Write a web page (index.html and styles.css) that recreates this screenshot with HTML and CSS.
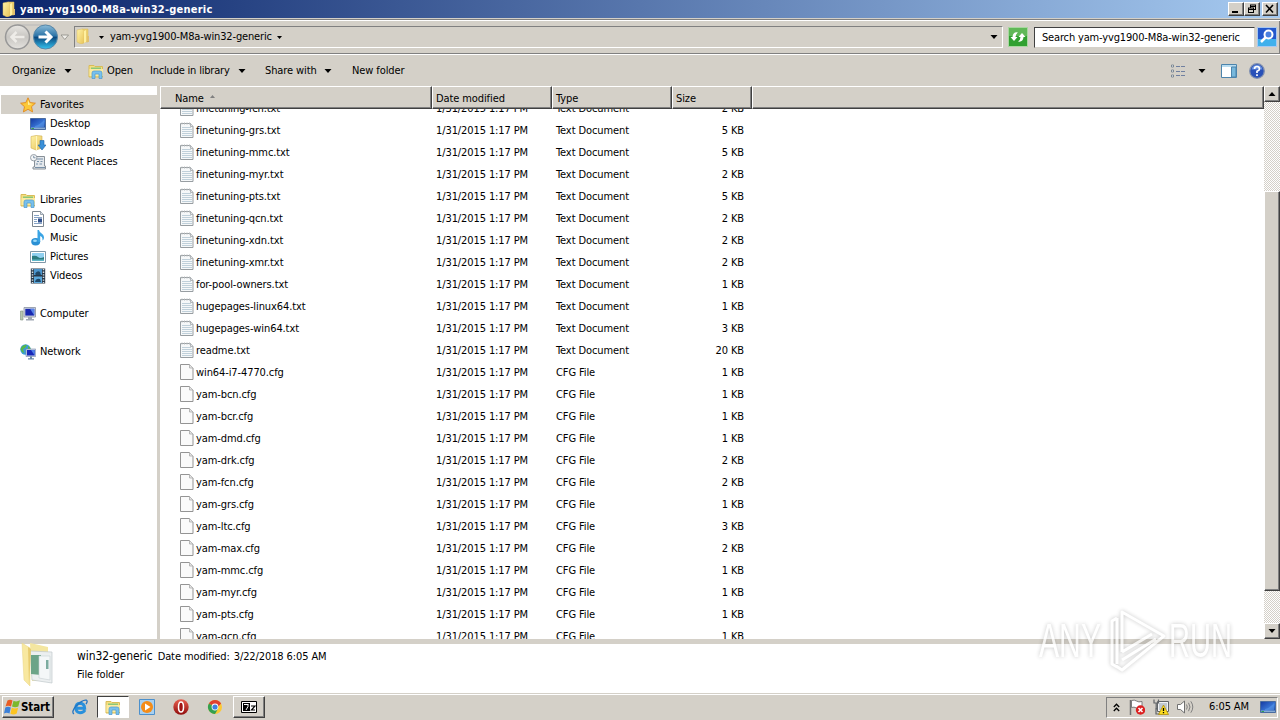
FILE: index.html
```html
<!DOCTYPE html>
<html lang="en">
<head>
    <meta charset="UTF-8">
    <title>yam-yvg1900-M8a-win32-generic</title>
    <link rel="stylesheet" href="styles.css">
</head>
<body>
    <!-- shared icons -->
    <svg class="defs">
        <defs>
            <linearGradient id="gFolder" x1="0" y1="0" x2="1" y2="1">
                <stop offset="0" stop-color="#fff3a8"/>
                <stop offset="1" stop-color="#e8c458"/>
            </linearGradient>
            <linearGradient id="gScreen" x1="0" y1="0" x2="1" y2="1">
                <stop offset="0" stop-color="#1438a0"/>
                <stop offset="0.6" stop-color="#3a78d8"/>
                <stop offset="1" stop-color="#1a3c90"/>
            </linearGradient>
            <linearGradient id="gBlue" x1="0" y1="0" x2="0" y2="1">
                <stop offset="0" stop-color="#8cbcd8"/>
                <stop offset="0.45" stop-color="#2c74a8"/>
                <stop offset="0.52" stop-color="#0c4a80"/>
                <stop offset="1" stop-color="#35c4f0"/>
            </linearGradient>
            <linearGradient id="gGrey" x1="0" y1="0" x2="0" y2="1">
                <stop offset="0" stop-color="#e8e6e2"/>
                <stop offset="0.5" stop-color="#c8c6c2"/>
                <stop offset="1" stop-color="#e4e2de"/>
            </linearGradient>
            <linearGradient id="gRed" x1="0" y1="0" x2="0" y2="1">
                <stop offset="0" stop-color="#e86050"/>
                <stop offset="1" stop-color="#900c0c"/>
            </linearGradient>
        </defs>
        <symbol id="i-folder" viewBox="0 0 16 16">
            <path d="M7 1h6v13H7z" fill="#ecd070" stroke="#d8b858" stroke-width=".5"/>
            <path d="M2 2l5-1 2 1v13l-3 1-4-2z" fill="url(#gFolder)" stroke="#dcbc60" stroke-width=".5"/>
            <path d="M9 3l2-1v12l-2 1z" fill="#fff0a0"/>
            <path d="M12 8h2v6h-2z" fill="#e0c070"/>
        </symbol>
        <symbol id="i-explorer" viewBox="0 0 16 16">
            <path d="M1 2.500h5l1 1h7.500V14H1z" fill="#f6de80" stroke="#d8bc58"/>
            <path d="M3 4.500h10v2H3z" fill="#8ac878"/>
            <path d="M1.500 6H15v7H1.500z" fill="#fbeaa0"/>
            <path d="M4 15.500V10q0-2 2-2h6q2 0 2 2v5.500h-3V11H7v4.500z" fill="#78c0ec" stroke="#4a98d0" stroke-width=".7"/>
        </symbol>
        <symbol id="i-star" viewBox="0 0 16 16">
            <path d="M8 .8l2.200 4.800 5.200.6-3.900 3.500 1.100 5.200L8 12.300l-4.600 2.600 1.100-5.200L.6 6.200l5.200-.6z" fill="#fcc838" stroke="#e08820" stroke-width=".9"/>
            <path d="M8 3l1.400 3.400 3 .5L8 8z" fill="#fff0a0"/>
        </symbol>
        <symbol id="i-desktop" viewBox="0 0 16 16">
            <path d="M.5 2.500h15v11H.5z" fill="url(#gScreen)" stroke="#4a6ca0"/>
            <path d="M1 11.500h14V13H1z" fill="#88acd4"/>
            <path d="M1.500 12h2.500v1H1.500z" fill="#30a050"/>
            <path d="M5 10q5-1 9-6v7H5z" fill="#5a98e8" opacity=".55"/>
        </symbol>
        <symbol id="i-downloads" viewBox="0 0 16 16">
            <path d="M1 1.500l5-1 6 .5v12l-6 2-5-2z" fill="url(#gFolder)" stroke="#d0b050" stroke-width=".6"/>
            <path d="M6.500 1v14" stroke="#fff6c0"/>
            <path d="M10 5.500h4V10h2l-4 5-4-5h2z" fill="#3a90d8" stroke="#1c62a8" stroke-width=".6"/>
        </symbol>
        <symbol id="i-recent" viewBox="0 0 16 16">
            <path d="M4.500 2.500h10V12H15.500v3H3v-2h1.500z" fill="#e4e8ec" stroke="#889098"/>
            <path d="M7 5h6M7 7.500h2M10.500 7.500h2M6 10h2M9.500 10H12M5 13.500h10" stroke="#7890a8"/>
            <circle cx="3.700" cy="3.700" r="3.200" fill="#f4f6f8" stroke="#98a0a8"/>
            <path d="M3.700 1.800v2h1.800" fill="none" stroke="#607890" stroke-width=".8"/>
        </symbol>
        <symbol id="i-document" viewBox="0 0 16 16">
            <path d="M2.500.5h8l3 3v12h-11z" fill="#fff" stroke="#7c8690"/>
            <path d="M10.500.5v3h3" fill="#d8e0e8" stroke="#7c8690" stroke-width=".7"/>
            <path d="M4 4.500h5M4 6.500h8M4 8.500h3M4 10.500h3M4 12.500h8" stroke="#7898c0" stroke-width=".9"/>
            <path d="M8 7.500h4v4H8z" fill="#30508c"/>
        </symbol>
        <symbol id="i-music" viewBox="0 0 16 16">
            <ellipse cx="5.700" cy="11.800" rx="4.500" ry="3.700" fill="#2a90d4"/>
            <path d="M7.500 0h1.500c.5 3 5 3.500 5 7.500 0 1.500-.8 2.500-1.500 3 .3-3-1-4-2.300-4.500V12L7.500 12z" fill="#3aa4e4"/>
            <ellipse cx="5" cy="10.800" rx="2" ry="1.300" fill="#98d8f8"/>
        </symbol>
        <symbol id="i-pictures" viewBox="0 0 16 16">
            <path d="M.5 2.500h15v11H.5z" fill="#fff" stroke="#8098a8"/>
            <path d="M2 4h12v8H2z" fill="#90d0f0"/>
            <path d="M2 7q4-1 6 1t6 0v4H2z" fill="#2c7c80"/>
            <path d="M2 10.500h12V12H2z" fill="#60b8c8"/>
        </symbol>
        <symbol id="i-videos" viewBox="0 0 16 16">
            <path d="M.8.500h14.400v15H.8z" fill="#283848"/>
            <path d="M4 1h8v6H4z" fill="#4a94cc"/>
            <path d="M4 8.500h8v6.500H4z" fill="#5aa8dc"/>
            <path d="M5 6q2-4 5-2l1 3H6zM5 14q1-4 5-3l1 3z" fill="#204868"/>
            <path d="M2.500 1v14M13.500 1v14" stroke="#d8e0e4" stroke-width="1.500" stroke-dasharray="1.300 1.300"/>
        </symbol>
        <symbol id="i-computer" viewBox="0 0 16 16">
            <path d="M.5 5h2.500v9H.5z" fill="#b8c8b0" stroke="#809080" stroke-width=".6"/>
            <path d="M4 1.500h11.500v9.500H4z" fill="#d8dce4" stroke="#8890a0" stroke-width=".8"/>
            <path d="M5.300 2.800h9v6.800h-9z" fill="#1828b0"/>
            <path d="M10 2.800h4.300v6.800z" fill="#5884e8"/>
            <path d="M8 11h4v2h2v1.500H6V13h2z" fill="#a0a8b4"/>
        </symbol>
        <symbol id="i-network" viewBox="0 0 16 16">
            <circle cx="5.500" cy="5.500" r="5.200" fill="#3a9cd4"/>
            <path d="M2 2.500Q5 0 7 1L5 4 3 5l1 4-2-1-1.500-3zM8 2l2.500 2v3H8z" fill="#58b848"/>
            <path d="M6 5h9.700v7.500H6z" fill="#c8d4e8" stroke="#7888a8" stroke-width=".6"/>
            <path d="M7 6h7.700v5.500H7z" fill="#1828b8"/>
            <path d="M11 6h3.700v5.500z" fill="#5080e8"/>
            <path d="M10 12.500h2v1.700h2v1.300H8v-1.300h2z" fill="#6888a8"/>
        </symbol>
        <symbol id="i-txt" viewBox="0 0 14 16">
            <path d="M.5 1.500h10l2.500 3v11H.5z" fill="#f6f8f9" stroke="#989ea2"/>
            <path d="M2 .5v2M4.500.5v2M7 .5v2M9.500.5v2" stroke="#b4b8ba"/>
            <path d="M2 5.500h9M2 7.500h10M2 9.500h10M2 11.500h10M2 13.500h10" stroke="#c0d0da"/>
            <path d="M10.500 1.500v3H13" fill="#e0e4e6" stroke="#a4a8ac" stroke-width=".8"/>
        </symbol>
        <symbol id="i-cfg" viewBox="0 0 14 16">
            <path d="M.5.500H9.500l3.500 3.500v11.500H.5z" fill="#fafafa" stroke="#949494"/>
            <path d="M9.500 .5v3.500H13" fill="#e4e4e4" stroke="#a8a8a8" stroke-width=".8"/>
        </symbol>
        <symbol id="i-down" viewBox="0 0 7 4"><path d="M0 0h7L3.500 4z"/></symbol>
        <symbol id="i-up" viewBox="0 0 7 4"><path d="M0 4h7L3.500 0z"/></symbol>
    </svg>

    <div class="titlebar">
        <svg class="icon"><use href="#i-folder"/></svg>
        <span class="title">yam-yvg1900-M8a-win32-generic</span>
        <div class="win-btn"><svg width="12" height="10"><path d="M2 7h6v2H2z"/></svg></div>
        <div class="win-btn"><svg width="12" height="10"><path d="M4.500 1v3M4 1h6M4 2.500h6M9.500 1v5M7 5.500h3M2 4h6M2 5.500h6M2.500 4v5M7.500 4v5M2 8.500h6" fill="none" stroke="#000"/></svg></div>
        <div class="win-btn close"><svg width="12" height="10"><path d="M2 1l7 7.500M9 1L2 8.500" stroke="#000" stroke-width="1.600"/></svg></div>
    </div>

    <div class="navbar">
        <svg class="nav-btns" width="70" height="30" viewBox="0 0 70 30">
            <path d="M16 3h28q12 0 12 12" fill="none" stroke="#b8b8b8"/>
            <circle cx="16.500" cy="15" r="12" fill="url(#gGrey)" stroke="#989898" stroke-width="1.500"/>
            <path d="M23.500 15H10.500m5-5l-5 5 5 5" fill="none" stroke="#eeece8" stroke-width="2.500"/>
            <circle cx="44.500" cy="15" r="12" fill="url(#gBlue)" stroke="#5888a8" stroke-width="1"/>
            <path d="M37.500 15h12m-5-5.500l5.500 5.500-5.500 5.500" fill="none" stroke="#fff" stroke-width="3"/>
            <path d="M60 13h7.500l-3.700 4.500z" fill="#f0eeea" stroke="#8c8c84" stroke-width=".8"/>
        </svg>
        <div class="address">
            <svg class="icon"><use href="#i-folder"/></svg>
            <svg class="crumb-arrow"><use href="#i-down"/></svg>
            <span>yam-yvg1900-M8a-win32-generic</span>
            <svg class="crumb-arrow"><use href="#i-down"/></svg>
            <svg class="arrow address-drop"><use href="#i-down"/></svg>
        </div>
        <svg class="refresh" width="20" height="20" viewBox="0 0 20 20">
            <path d="M.5.500h19v19H.5z" fill="#30a030" stroke="#a8d8a0"/>
            <path d="M1 1h18v8H1z" fill="#60b858"/>
            <path d="M2.500 10L6 14l3.500-4H7.500Q7.500 7 10 5.500 5 4.500 4.500 10zM17.500 10L14 6l-3.500 4h2Q12.500 13 10 14.500q5 1 5.500-4.500z" fill="#fff"/>
        </svg>
        <div class="search">Search yam-yvg1900-M8a-win32-generic</div>
        <svg class="search-btn" width="20" height="20" viewBox="0 0 20 20">
            <path d="M.5.500h19v19H.5z" fill="#2458cc" stroke="#a8c8f0"/>
            <path d="M1 12h18v7H1z" fill="#40b0ec"/>
            <circle cx="11.500" cy="7.500" r="4" fill="#4a80e0" stroke="#fff" stroke-width="2"/>
            <path d="M8.500 10.500L4 15" stroke="#fff" stroke-width="2.500"/>
        </svg>
    </div>

    <div class="commands">
        <span class="cmd organize">Organize<svg class="arrow"><use href="#i-down"/></svg></span>
        <span class="cmd open"><svg class="icon"><use href="#i-explorer"/></svg>Open</span>
        <span class="cmd include">Include in library<svg class="arrow"><use href="#i-down"/></svg></span>
        <span class="cmd share">Share with<svg class="arrow"><use href="#i-down"/></svg></span>
        <span class="cmd">New folder</span>
        <div class="view-tools">
            <svg width="16" height="14" viewBox="0 0 16 14">
                <path d="M1.500 1h2v2h-2zM1.500 6h2v2h-2zM1.500 11h2v2h-2z" fill="#fff" stroke="#7c8894"/>
                <path d="M6 2.500h4M11 2.500h4M6 7.500h4M11 7.500h4M6 11.500h4M11 11.500h4" stroke="#7080a0"/>
            </svg>
            <svg class="arrow"><use href="#i-down"/></svg>
            <svg class="pane" width="16" height="14" viewBox="0 0 16 14">
                <path d="M.5.500h15v13H.5z" fill="#fff" stroke="#4c84ac"/>
                <path d="M1 1h14v2H1z" fill="#b8dcf0"/>
                <path d="M10.500 3v10H15V3z" fill="#78b8dc" stroke="#4c84ac"/>
            </svg>
            <svg class="help" width="16" height="16" viewBox="0 0 16 16">
                <circle cx="8" cy="8" r="7.300" fill="#2850b8" stroke="#8090b0" stroke-width="1.300"/>
                <path d="M2.500 6.500a5.600 5.600 0 0 1 11 0z" fill="#6890e0"/>
                <path d="M5.500 6q0-2.500 2.500-2.500T10.500 6Q10.500 7.200 8 8.300V10M8 11.300v1.700" fill="none" stroke="#fff" stroke-width="1.700"/>
            </svg>
        </div>
    </div>

    <div class="main">
        <div class="sidebar">
            <div class="side-item root selected"><svg class="icon"><use href="#i-star"/></svg>Favorites</div>
            <div class="side-item"><svg class="icon"><use href="#i-desktop"/></svg>Desktop</div>
            <div class="side-item"><svg class="icon"><use href="#i-downloads"/></svg>Downloads</div>
            <div class="side-item"><svg class="icon"><use href="#i-recent"/></svg>Recent Places</div>
            <div class="side-item root spaced"><svg class="icon"><use href="#i-explorer"/></svg>Libraries</div>
            <div class="side-item"><svg class="icon"><use href="#i-document"/></svg>Documents</div>
            <div class="side-item"><svg class="icon"><use href="#i-music"/></svg>Music</div>
            <div class="side-item"><svg class="icon"><use href="#i-pictures"/></svg>Pictures</div>
            <div class="side-item"><svg class="icon"><use href="#i-videos"/></svg>Videos</div>
            <div class="side-item root spaced"><svg class="icon"><use href="#i-computer"/></svg>Computer</div>
            <div class="side-item root spaced"><svg class="icon"><use href="#i-network"/></svg>Network</div>
        </div>
        <div class="content">
            <div class="list-header">
                <div class="col name">Name<svg class="sort"><use href="#i-up"/></svg></div>
                <div class="col date">Date modified</div>
                <div class="col type">Type</div>
                <div class="col size">Size</div>
                <div class="col rest"></div>
            </div>
            <div class="list"><div class="rows" id="rows"></div></div>
        </div>
        <div class="scrollbar">
            <div class="sb-btn"><svg class="arrow"><use href="#i-up"/></svg></div>
            <div class="sb-thumb"></div>
            <div class="sb-btn bottom"><svg class="arrow"><use href="#i-down"/></svg></div>
        </div>
    </div>

    <div class="details">
        <svg class="big-folder" width="36" height="46" viewBox="0 0 36 46">
            <path d="M10 1l18 4v34H12z" fill="#f4e6a0"/>
            <path d="M10 9l22 1v31l-20-3z" fill="#eceff0" stroke="#c0c8cc" stroke-width=".7"/>
            <path d="M11 13h10v20l-10-1z" fill="#6ca488"/>
            <path d="M19 14h11v24l-11-2z" fill="#f4f7f8" stroke="#c8d0d4" stroke-width=".6"/>
            <path d="M26 18h2.500v9H26z" fill="#7cacA0"/>
            <path d="M2 1l8 5v38l-6-6z" fill="#f8e8a0" stroke="#e8d484" stroke-width=".5"/>
            <path d="M8 5l3 2-2 37z" fill="#e8cc70"/>
        </svg>
        <div class="details-text">
            <div><span class="item-name">win32-generic</span><span>Date modified:</span><span class="stamp">3/22/2018 6:05 AM</span></div>
            <div>File folder</div>
        </div>
    </div>

    <div class="taskbar">
        <div class="start">
            <svg width="16" height="16" viewBox="0 0 16 16">
                <path d="M3.500 1.500Q6 0 8.500 1.500L7 7.500Q4 6 1.500 7.500z" fill="#e85c24"/>
                <path d="M9.500 1.800q3 1.500 6.500-.5l-1.700 6.200q-3 1.500-6.300 0z" fill="#7cb82c"/>
                <path d="M1.300 8.500Q4 7 6.800 8.500L5.500 14.500Q2.500 13 0 14.500z" fill="#3c80d8"/>
                <path d="M7.800 8.700q3 1.500 6.300 0L12.700 14.500q-3 1.700-6.300.2z" fill="#fcc420"/>
            </svg>
            Start
        </div>
        <svg class="tb-icon ie" viewBox="0 0 16 16">
            <path d="M13 11Q11.500 13.700 8 13.700 3.800 13.300 3.800 9t4.200-4.700q4.500.4 4.700 5H5" fill="none" stroke="#2890dc" stroke-width="2.900"/>
            <path d="M2 15Q-1 13 4 7 11 0 14.500 1.200q1.500 1-.5 4" fill="none" stroke="#2474c0" stroke-width="1.300"/>
        </svg>
        <div class="task active"><svg class="tb-icon"><use href="#i-explorer"/></svg></div>
        <svg class="tb-icon wmp" viewBox="0 0 16 16">
            <path d="M.5.500h15v15H.5z" fill="#a8d0f0" stroke="#4c90cc"/>
            <circle cx="8" cy="8" r="6" fill="#f48c18"/>
            <path d="M6 4.500v7l5.500-3.500z" fill="#fff"/>
        </svg>
        <svg class="tb-icon opera" viewBox="0 0 16 16">
            <circle cx="8" cy="8" r="7.700" fill="url(#gRed)"/>
            <ellipse cx="8" cy="8" rx="2.500" ry="5" fill="#a01414" stroke="#fff" stroke-width="1.500"/>
        </svg>
        <svg class="tb-icon chrome" viewBox="0 0 16 16">
            <circle cx="8" cy="8" r="7" fill="#fcc934"/>
            <path d="M8 8L1.900 4.500A7 7 0 0 1 14.100 4.500z" fill="#e04030"/>
            <path d="M8 8L1.900 4.500A7 7 0 0 0 8 15l3-5z" fill="#34a050"/>
            <path d="M8 4.500h6.100l-4 4z" fill="#e04030"/>
            <circle cx="8" cy="8" r="3.400" fill="#fff"/>
            <circle cx="8" cy="8" r="2.600" fill="#4080e0"/>
        </svg>
        <div class="task">
            <svg width="16" height="12" viewBox="0 0 16 12">
                <path d="M.5.500h15v11H.5z" fill="#fff" stroke="#000"/>
                <path d="M2 2h7v8H2z"/>
                <path d="M3 3.500h4.500M7 3.500v2L5 9" fill="none" stroke="#fff"/>
                <path d="M10 5h4L10.500 9H14" fill="none" stroke="#000" stroke-width="1.200"/>
            </svg>
        </div>
        <div class="tray">
            <svg class="chevrons" width="7" height="9" viewBox="0 0 7 9"><path d="M.8 4L3.500 1.200 6.200 4M.8 8l2.700-2.800L6.200 8" fill="none" stroke="#000" stroke-width="1.300"/></svg>
            <svg class="flag" width="16" height="16" viewBox="0 0 16 16">
                <path d="M1.500 1v15" stroke="#707070" stroke-width="1.500"/>
                <path d="M2.500 1.500q3-1 5 .5t5.500.5v7q-3 1-5.500-.5T2.500 8.500z" fill="#fff" stroke="#707070" stroke-width=".9"/>
                <circle cx="11.500" cy="11" r="4.700" fill="#dc2020"/>
                <path d="M9.500 9l4 4M13.500 9l-4 4" stroke="#fff" stroke-width="1.600"/>
            </svg>
            <svg class="net" width="16" height="16" viewBox="0 0 16 16">
                <path d="M4.500 2.500h11v10h-11z" fill="#f0f2f4" stroke="#606468"/>
                <path d="M6 4h8v7H6z" fill="#c0c8d0"/>
                <path d="M1 .5v3.500h4.500V.5M3.200 4v5q0 1 1.300 1M3 9v6h4" fill="none" stroke="#606468" stroke-width="1.200"/>
                <path d="M10.500 6l5 9.500h-10z" fill="#fcdc20" stroke="#a88400" stroke-width=".7"/>
                <path d="M10.500 9v3M10.500 13v1.300" stroke="#000" stroke-width="1.300"/>
            </svg>
            <svg class="speaker" width="17" height="14" viewBox="0 0 17 14">
                <path d="M.5 4.500h3L7.500 1v12l-4-3.500h-3z" fill="#fff" stroke="#707070"/>
                <path d="M9.500 4.500q1.500 2.500 0 5M11.500 2.800q3 4.200 0 8.400M13.800 1.300q4 5.700 0 11.400" fill="none" stroke="#808080"/>
            </svg>
            <span class="clock">6:05 AM</span>
            <svg class="icon show-desktop"><use href="#i-desktop"/></svg>
        </div>
    </div>

    <svg class="watermark" width="204" height="76" viewBox="0 0 204 76">
        <g class="wm-shape">
            <text x="5" y="55" textLength="62" lengthAdjust="spacingAndGlyphs">ANY</text>
            <text x="135" y="55" textLength="63" lengthAdjust="spacingAndGlyphs">RUN</text>
            <path d="M88 50V10l42 24-42 34-6-4M83 16l-5 3v43l5 3M83 16v46M88 50l30-18M88 58l34-21"/>
        </g>
    </svg>

    <script>
        // [file name, size in KB]
        const files = [
            ['finetuning-fcn.txt', 2], ['finetuning-grs.txt', 5], ['finetuning-mmc.txt', 5],
            ['finetuning-myr.txt', 2], ['finetuning-pts.txt', 5], ['finetuning-qcn.txt', 2],
            ['finetuning-xdn.txt', 2], ['finetuning-xmr.txt', 2], ['for-pool-owners.txt', 1],
            ['hugepages-linux64.txt', 1], ['hugepages-win64.txt', 3], ['readme.txt', 20],
            ['win64-i7-4770.cfg', 1], ['yam-bcn.cfg', 1], ['yam-bcr.cfg', 1], ['yam-dmd.cfg', 1],
            ['yam-drk.cfg', 2], ['yam-fcn.cfg', 2], ['yam-grs.cfg', 1], ['yam-ltc.cfg', 3],
            ['yam-max.cfg', 2], ['yam-mmc.cfg', 1], ['yam-myr.cfg', 1], ['yam-pts.cfg', 1],
            ['yam-qcn.cfg', 1]
        ];

        document.getElementById('rows').innerHTML = files.map(([name, size]) => {
            const ext = name.split('.').pop();
            return `
                <div class="row">
                    <svg class="file-icon"><use href="#i-${ext}"/></svg>
                    <span class="f-name">${name}</span>
                    <span class="f-date">1/31/2015 1:17 PM</span>
                    <span class="f-type">${ext === 'txt' ? 'Text Document' : 'CFG File'}</span>
                    <span class="f-size">${size} KB</span>
                </div>`;
        }).join('');
    </script>
</body>
</html>
```
FILE: styles.css
```css
* {
    margin: 0;
    padding: 0;
    box-sizing: border-box;
}

body {
    width: 1280px;
    height: 720px;
    overflow: hidden;
    display: flex;
    flex-direction: column;
    background: #d4d0c8;
    color: #000;
    font-family: Tahoma, "DejaVu Sans Condensed", "DejaVu Sans", sans-serif;
    font-size: 11px;
    letter-spacing: -0.1px;
    line-height: 14px;
    white-space: nowrap;
    cursor: default;
}

svg {
    display: block;
    flex: none;
}

.defs {
    position: absolute;
    width: 0;
    height: 0;
}

.icon {
    width: 16px;
    height: 16px;
}

.arrow {
    width: 8px;
    height: 4px;
}

/* title bar */
.titlebar {
    height: 18px;
    flex: none;
    display: flex;
    align-items: center;
    padding: 0 2px 0 1px;
    background: linear-gradient(to right, #0a246a, #a6caf0);
}

.title {
    flex: 1;
    margin-left: 3px;
    padding-top: 1px;
    color: #fff;
    font-weight: bold;
    letter-spacing: 0.23px;
}

.win-btn {
    width: 16px;
    height: 14px;
    padding: 1px;
    background: #d4d0c8;
    border: 1px solid;
    border-color: #fff #404040 #404040 #fff;
    box-shadow: inset -1px -1px #808080;
}

.win-btn.close {
    margin-left: 2px;
}

/* back / forward, address and search */
.navbar {
    height: 36px;
    flex: none;
    display: flex;
    align-items: center;
    margin-top: 1px;
    padding: 0 2px 0 1px;
    border-top: 1px solid #808080;
    border-bottom: 1px solid #fff;
    box-shadow: inset 0 1px #fff, inset 0 -1px #808080, inset -1px 0 #808080;
}

.nav-btns {
    margin-top: -1px;
}

.address {
    width: 929px;
    height: 22px;
    margin-left: 3px;
    display: flex;
    align-items: center;
    border: 1px solid;
    border-color: #808080 #fff #fff #808080;
}

.address .icon {
    margin-top: -2px;
}

.address .crumb-arrow {
    width: 5px;
    height: 3px;
    margin: 0 6px 0 8px;
}

.address .crumb-arrow + span {
    margin-right: -3px;
    letter-spacing: -0.16px;
}

.address-drop {
    margin-left: auto;
    margin-right: 4px;
}

.refresh {
    margin-left: 5px;
}

.search {
    width: 221px;
    height: 21px;
    margin-left: 6px;
    padding: 2px 7px;
    line-height: 16px;
    letter-spacing: -0.16px;
    background: #fff;
    border: 1px solid;
    border-color: #404040 #d4d0c8 #d4d0c8 #404040;
}

.search-btn {
    margin-left: 2px;
}

/* command bar */
.commands {
    height: 31px;
    flex: none;
    display: flex;
    align-items: center;
    padding-left: 12px;
}

.cmd {
    display: flex;
    align-items: center;
}

.cmd .arrow {
    margin-left: auto;
}

.cmd.organize {
    width: 60px;
    margin-right: 16px;
}

.cmd.open {
    width: 62px;
}

.cmd.open .icon {
    margin-right: 3px;
}

.cmd.include {
    width: 96px;
    letter-spacing: -0.2px;
}

.cmd.share {
    width: 67px;
    margin: 0 20px 0 19px;
}

.view-tools {
    margin-left: auto;
    display: flex;
    align-items: center;
    padding-right: 15px;
}

.view-tools .arrow {
    margin-left: 12px;
}

.view-tools .pane {
    margin-left: 15px;
}

.view-tools .help {
    margin-left: 12px;
}

/* folder tree */
.main {
    height: 553px;
    flex: none;
    display: flex;
}

.sidebar {
    width: 160px;
    padding-top: 9px;
    background: #fff;
    border-right: 3px solid #d4d0c8;
}

.side-item {
    height: 19px;
    display: flex;
    align-items: center;
    gap: 4px;
    padding-left: 30px;
}

.side-item.root {
    margin-left: 1px;
    padding-left: 19px;
}

.side-item.selected {
    background: #d4d0c8;
}

.side-item.spaced {
    margin-top: 19px;
}

/* file list */
.content {
    flex: 1;
    display: flex;
    flex-direction: column;
    background: #fff;
}

.list-header {
    height: 23px;
    flex: none;
    display: flex;
    background: #d4d0c8;
}

.col {
    display: flex;
    align-items: center;
    padding: 2px 0 0 3px;
    border: 1px solid;
    border-color: #fff #404040 #404040 #fff;
    box-shadow: inset -1px -1px #808080;
}

.col.name {
    width: 272px;
    padding-left: 14px;
}

.col.date,
.col.type {
    width: 120px;
}

.col.size {
    width: 80px;
}

.col.rest {
    flex: 1;
}

.sort {
    width: 5px;
    height: 3px;
    margin: -4px 0 0 6px;
    fill: #808080;
}

.list {
    flex: 1;
    overflow: hidden;
}

.rows {
    margin-top: -12px;
    height: 542px;
    overflow: hidden;
}

.row {
    height: 22px;
    display: flex;
    align-items: center;
    padding-left: 20px;
}

.row span {
    padding-top: 1px;
}

.file-icon {
    width: 14px;
    height: 16px;
    margin: -1px 2px 0 0;
}

.f-name {
    width: 240px;
}

.f-date,
.f-type {
    width: 120px;
}

.f-size {
    width: 68px;
    text-align: right;
}

/* scrollbar */
.scrollbar {
    width: 16px;
    display: flex;
    flex-direction: column;
    background: repeating-conic-gradient(#fff 0 25%, #d4d0c8 0 50%) 0 0 / 2px 2px;
}

.sb-btn,
.sb-thumb {
    background: #d4d0c8;
    border: 1px solid;
    border-color: #fff #404040 #404040 #fff;
    box-shadow: inset -1px -1px #808080;
}

.sb-btn {
    height: 16px;
    display: flex;
    align-items: center;
    justify-content: center;
}

.sb-btn.bottom {
    margin-top: auto;
}

.sb-thumb {
    height: 400px;
    margin-top: 89px;
}

/* details pane */
.details {
    height: 49px;
    flex: none;
    display: flex;
    margin-top: 5px;
    padding-left: 20px;
    background: #fff;
}

.big-folder {
    margin-top: -2px;
}

.details-text {
    margin: 3px 0 0 21px;
    line-height: 18px;
}

.item-name {
    font-size: 12px;
    letter-spacing: -0.08px;
    margin-right: 5px;
}

.stamp {
    margin-left: 4px;
}

/* taskbar */
.taskbar {
    flex: 1;
    display: flex;
    align-items: center;
    margin-top: 1px;
    padding: 0 2px 1px;
    border-top: 1px solid #fff;
}

.start,
.task {
    display: flex;
    align-items: center;
    background: #d4d0c8;
    border: 1px solid;
    border-color: #fff #404040 #404040 #fff;
    box-shadow: inset -1px -1px #808080;
}

.start {
    width: 52px;
    height: 22px;
    gap: 1px;
    padding-left: 1px;
    font-size: 11.5px;
    font-weight: bold;
}

.task {
    width: 32px;
    height: 22px;
    justify-content: center;
}

.task.active {
    background: #fff;
    border-color: #404040 #fff #fff #404040;
    box-shadow: none;
}

.tb-icon {
    width: 16px;
    height: 16px;
}

.ie {
    margin: 0 9px 0 18px;
}

.wmp {
    margin-left: 10px;
}

.opera {
    margin-left: 18px;
}

.chrome {
    margin: 0 10px 0 18px;
}

.tray {
    width: 172px;
    height: 21px;
    margin-left: auto;
    display: flex;
    align-items: center;
    padding-left: 6px;
    border: 1px solid;
    border-color: #808080 #fff #fff #808080;
}

.flag {
    margin-left: 9px;
}

.net {
    margin-left: 8px;
}

.speaker {
    margin-left: 8px;
}

.clock {
    margin-left: 15px;
}

.show-desktop {
    margin-left: auto;
    margin-right: 1px;
}

/* overlay logo */
.watermark {
    position: absolute;
    left: 1034px;
    top: 602px;
    filter: drop-shadow(0 0 2px rgba(0, 0, 0, 0.3));
    opacity: 0.75;
}

.wm-shape text {
    font-family: "Liberation Sans", Arial, sans-serif;
    font-size: 49px;
    letter-spacing: 0;
    fill: #fff;
}

.wm-shape path {
    fill: none;
    stroke: #fff;
    stroke-width: 3;
    stroke-linejoin: round;
}
```
